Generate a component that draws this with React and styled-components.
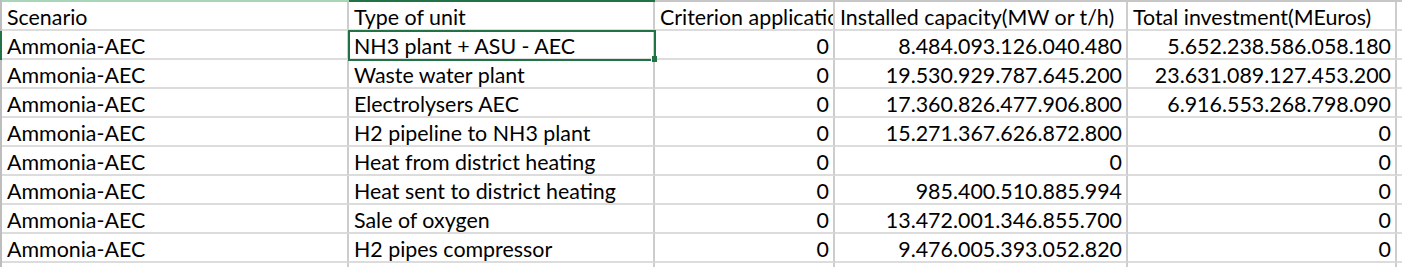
import React from 'react';
import styled, { createGlobalStyle } from 'styled-components';

const GlobalStyle = createGlobalStyle`
  html, body {
    margin: 0;
    padding: 0;
    background: #ffffff;
    overflow: hidden;
  }
`;

const COLS = '2px 347px 306px 180px 293px 269px 5px';

const Sheet = styled.div`
  display: grid;
  grid-template-columns: ${COLS};
  grid-template-rows: 2px;
  grid-auto-rows: 29px;
  width: 1402px;
  font-family: Lato, "Open Sans", sans-serif;
  font-size: 21.4px;
  color: #000;
  background: #fff;
`;

const HeaderStrip = styled.div`
  height: 2px;
  background: ${(p) => p.$color || '#c6c6c6'};
`;

const RowHead = styled.div`
  background: ${(p) => (p.$active ? '#217346' : '#bdbdbd')};
`;

const Cell = styled.div`
  position: relative;
  box-sizing: border-box;
  display: flex;
  align-items: flex-end;
  justify-content: ${(p) => (p.$num ? 'flex-end' : 'flex-start')};
  padding: 0 4px 0 5px;
  border-right: 2px solid #cdcdcd;
  border-bottom: 2px solid #dcdcdc;
  white-space: nowrap;
  overflow: ${(p) => (p.$selected ? 'visible' : 'hidden')};
  line-height: 24px;
  ${(p) =>
    p.$selected &&
    `
    outline: 2px solid #217346;
    outline-offset: -1px;
    z-index: 1;
    &::after {
      content: '';
      position: absolute;
      right: -4px;
      bottom: -4px;
      width: 5px;
      height: 6px;
      background: #217346;
      border-left: 1px solid #fff;
    }
  `}
`;

const header = [
  'Scenario',
  'Type of unit',
  'Criterion application',
  'Installed capacity(MW or t/h)',
  'Total investment(MEuros)',
];

const rows = [
  ['Ammonia-AEC', 'NH3 plant + ASU - AEC', '0', '8.484.093.126.040.480', '5.652.238.586.058.180'],
  ['Ammonia-AEC', 'Waste water plant', '0', '19.530.929.787.645.200', '23.631.089.127.453.200'],
  ['Ammonia-AEC', 'Electrolysers AEC', '0', '17.360.826.477.906.800', '6.916.553.268.798.090'],
  ['Ammonia-AEC', 'H2 pipeline to NH3 plant', '0', '15.271.367.626.872.800', '0'],
  ['Ammonia-AEC', 'Heat from district heating', '0', '0', '0'],
  ['Ammonia-AEC', 'Heat sent to district heating', '0', '985.400.510.885.994', '0'],
  ['Ammonia-AEC', 'Sale of oxygen', '0', '13.472.001.346.855.700', '0'],
  ['Ammonia-AEC', 'H2 pipes compressor', '0', '9.476.005.393.052.820', '0'],
];

const stripColors = ['#bdbdbd', '#a8d5b8', '#217346', '#c6c6c6', '#c6c6c6', '#c6c6c6', '#c6c6c6'];

export default function App() {
  return (
    <>
      <GlobalStyle />
      <Sheet>
        {stripColors.map((c, i) => (
          <HeaderStrip key={i} $color={c} />
        ))}

        <RowHead />
        {header.map((h, i) => (
          <Cell key={i}>{h}</Cell>
        ))}
        <Cell />

        {rows.map((r, ri) => (
          <React.Fragment key={ri}>
            <RowHead $active={ri === 0} />
            {r.map((v, ci) => (
              <Cell key={ci} $num={ci >= 2} $selected={ri === 0 && ci === 1}>
                {v}
              </Cell>
            ))}
            <Cell />
          </React.Fragment>
        ))}

        <RowHead />
        {[0, 1, 2, 3, 4, 5].map((i) => (
          <Cell key={i} />
        ))}
      </Sheet>
    </>
  );
}
